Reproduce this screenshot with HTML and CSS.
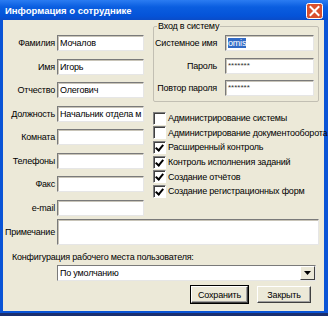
FILE: index.html
```html
<!DOCTYPE html>
<html lang="ru">
<head>
<meta charset="UTF-8">
<title>Информация о сотруднике</title>
<link rel="stylesheet" href="styles.css">
</head>
<body>
<div class="window">
  <div class="titlebar">
    <span class="title">Информация о сотруднике</span>
    <span class="close">
      <svg width="17" height="16" viewBox="0 0 17 16">
        <rect x="0.5" y="0.5" width="16" height="15" rx="2" fill="#d9502e" stroke="#fff"/>
        <path d="M4.5 4 L12.5 12 M12.5 4 L4.5 12" stroke="#fff" stroke-width="2" stroke-linecap="square"/>
      </svg>
    </span>
  </div>
  <div class="body">
    <div class="top">
      <div class="fields">
        <label>Фамилия</label><div class="input">Мочалов</div>
        <label>Имя</label><div class="input">Игорь</div>
        <label>Отчество</label><div class="input">Олегович</div>
        <label>Должность</label><div class="input">Начальник отдела м</div>
        <label>Комната</label><div class="input"></div>
        <label>Телефоны</label><div class="input"></div>
        <label>Факс</label><div class="input"></div>
        <label>e-mail</label><div class="input"></div>
      </div>
      <div class="side">
        <fieldset class="login">
          <legend>Вход в систему</legend>
          <div class="login-grid">
            <label>Системное имя</label><div class="input"><span class="sel">omis</span></div>
            <label>Пароль</label><div class="input pass">*******</div>
            <label>Повтор пароля</label><div class="input pass">*******</div>
          </div>
        </fieldset>
        <div class="checks">
          <div class="check"><span class="box"></span>Администрирование системы</div>
          <div class="check"><span class="box"></span>Администрирование документооборота</div>
          <div class="check"><span class="box on"></span>Расширенный контроль</div>
          <div class="check"><span class="box on"></span>Контроль исполнения заданий</div>
          <div class="check"><span class="box on"></span>Создание отчётов</div>
          <div class="check"><span class="box on"></span>Создание регистрационных форм</div>
        </div>
      </div>
    </div>
    <div class="note">
      <label>Примечание</label><div class="input area"></div>
    </div>
    <div class="config-label">Конфигурация рабочего места пользователя:</div>
    <div class="select">
      <span class="value">По умолчанию</span>
      <span class="arrow">
        <svg width="7" height="4" viewBox="0 0 7 4"><path d="M0 0 H7 L3.5 4 Z" fill="#000"/></svg>
      </span>
    </div>
    <div class="buttons">
      <button class="btn save">Сохранить</button>
      <button class="btn">Закрыть</button>
    </div>
  </div>
</div>
</body>
</html>
```

FILE: styles.css
```css
body {
  margin: 0;
  background: #1c3f94;
  font-family: "Liberation Sans", Arial, sans-serif;
  font-size: 9px;
  letter-spacing: -0.2px;
  color: #000;
}
.window {
  width: 328px;
  height: 316px;
  background: #0a54d6;
  box-sizing: border-box;
  border-bottom: 3px solid #1b2f6e;
}
.titlebar {
  height: 20px;
  display: flex;
  align-items: center;
  justify-content: space-between;
  padding: 0 5px 0 5px;
  background: linear-gradient(#2b7cf2, #0a5ee0 35%, #0553d8 80%, #0a4cc8);
}
.title {
  color: #fff;
  font-weight: bold;
  font-size: 9.5px;
  letter-spacing: 0;
}
.close {
  display: flex;
  margin-top: 1px;
}
.body {
  margin: 0 4px 0 3px;
  height: 291px;
  background: #ece9d8;
}
.top {
  display: flex;
  gap: 9px;
}
.fields {
  flex: none;
  width: 141px;
  padding-top: 15px;
  display: grid;
  grid-template-columns: 52px 87px;
  grid-auto-rows: 16px;
  column-gap: 2px;
  row-gap: 7.5px;
}
label {
  text-align: right;
  align-self: center;
  white-space: nowrap;
}
.input {
  background: #fff;
  border: 1px solid;
  border-color: #7a7a7a #e6e6e6 #e6e6e6 #7a7a7a;
  box-shadow: inset 1px 1px #c8c4b8;
  box-sizing: border-box;
  padding: 0 2px;
  line-height: 14px;
  white-space: nowrap;
  overflow: hidden;
}
.side {
  flex: none;
  width: 166px;
}
.login {
  margin: 1px 0 0;
  padding: 4px 4px 5px 1px;
  border: 1px solid #c2bfb3;
  border-radius: 2px;
  height: 81px;
  box-sizing: border-box;
}
.login legend {
  padding: 0 1px;
  margin-left: 2px;
}
.login-grid {
  display: grid;
  grid-template-columns: 62px 89px;
  grid-auto-rows: 16px;
  column-gap: 8px;
  row-gap: 6.5px;
}
.sel {
  background: #316ac5;
  color: #fff;
}
.pass {
  font-size: 8px;
  letter-spacing: 0;
  color: #333;
}
.checks {
  margin-top: 9px;
}
.check {
  height: 14.6px;
  display: flex;
  align-items: center;
  white-space: nowrap;
}
.box {
  flex: none;
  width: 11px;
  height: 11px;
  background: #fff;
  border: 1px solid;
  border-color: #808080 #fff #fff #808080;
  box-shadow: inset 1px 1px #404040;
  margin-right: 2px;
  position: relative;
}
.box.on::after {
  content: "";
  position: absolute;
  left: 3px;
  top: 1px;
  width: 3px;
  height: 6px;
  border: solid #000;
  border-width: 0 2px 2px 0;
  transform: rotate(40deg);
}
.note {
  margin-top: 3.5px;
  display: grid;
  grid-template-columns: 52px 262px;
  column-gap: 2px;
}
.note label {
  align-self: center;
}
.area {
  height: 26px;
}
.config-label {
  margin: 6px 0 0 9px;
  line-height: 13px;
}
.select {
  margin: 1px 0 0 54px;
  width: 259px;
  height: 16px;
  display: flex;
  align-items: stretch;
  background: #fff;
  border: 1px solid;
  border-color: #7a7a7a #e6e6e6 #e6e6e6 #7a7a7a;
  box-sizing: border-box;
}
.select .value {
  flex: 1;
  padding: 0 2px;
  line-height: 14px;
}
.select .arrow {
  width: 13px;
  display: flex;
  align-items: center;
  justify-content: center;
  background: #ece9d8;
  border: 1px solid;
  border-color: #fff #404040 #404040 #fff;
}
.buttons {
  display: flex;
  justify-content: flex-end;
  gap: 9px;
  margin-top: 5px;
  padding-right: 13px;
}
.btn {
  font-family: inherit;
  font-size: 9px;
  letter-spacing: -0.2px;
  height: 17px;
  padding: 0;
  background: #ece9d8;
  border: 1px solid;
  border-color: #fff #404040 #404040 #fff;
  box-shadow: inset -1px -1px #a0a0a0;
  width: 54px;
}
.btn.save {
  width: 57px;
  outline: 1px solid #000;
}
```
